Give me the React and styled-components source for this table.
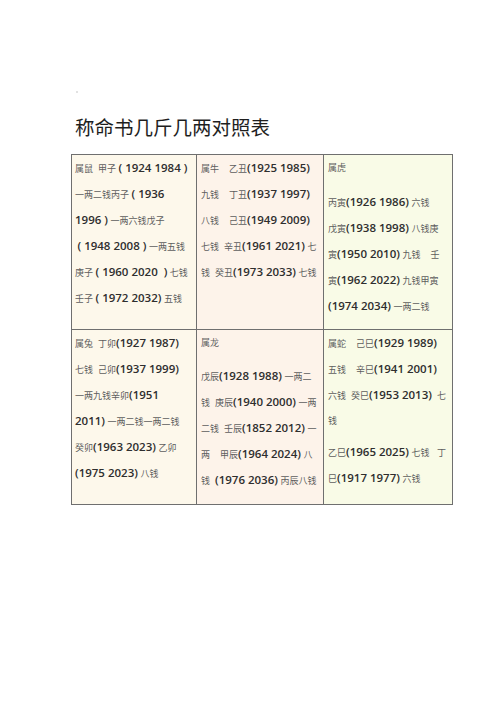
import React from "react";
import styled, { createGlobalStyle } from "styled-components";

const Global = createGlobalStyle`
  html, body { margin: 0; padding: 0; background: #ffffff; }
  body { font-family: "Liberation Sans", "Noto Sans CJK SC", sans-serif; }
`;

const Page = styled.div`
  width: 500px;
  height: 707px;
  box-sizing: border-box;
  padding: 91px 0 0 71px;
  background: #fff;
`;

const Dot = styled.div`
  width: 2px;
  height: 2px;
  margin-left: 5px;
  background: #d8d8d8;
  border-radius: 1px;
`;

const Title = styled.h1`
  margin: 19px 0 0 4px;
  font-family: "Noto Sans CJK SC", sans-serif;
  font-size: 19.5px;
  font-weight: 400;
  line-height: 30px;
  color: #1e1e1e;
  height: 42px;
`;

const Table = styled.div`
  display: grid;
  grid-template-columns: 125px 127px 129px;
  grid-template-rows: 175px 175px;
  width: 382px;
  box-sizing: border-box;
  border-left: 1px solid #6f6f6f;
  border-top: 1px solid #6f6f6f;
`;

const bgs = ["#fdf8eb", "#fdf3ea", "#f9fbe7"];

const Cell = styled.div`
  box-sizing: border-box;
  border-right: 1px solid #6f6f6f;
  border-bottom: 1px solid #6f6f6f;
  background: ${(p) => bgs[p.$col]};
  padding: 0 0 0 ${(p) => (p.$col === 0 ? 3 : 4)}px;
  overflow: hidden;
`;

const Line = styled.div`
  height: 26px;
  line-height: 26px;
  white-space: pre;
  font-family: "Liberation Sans", "Noto Sans CJK SC", sans-serif;
  font-size: 9px;
  color: #5e5e5e;
  margin-top: ${(p) => p.$gap || 0}px;
`;

const Num = styled.span`
  font-family: "Open Sans", "Liberation Sans", sans-serif;
  font-weight: 600;
  font-size: 11.5px;
  color: #2e2e2e;
`;

const renderLine = (s) => {
  const parts = s.split(/([0-9()]+(?: +[0-9()]+)*)/);
  return parts.map((p, i) =>
    i % 2 === 1 ? <Num key={i}>{p}</Num> : <React.Fragment key={i}>{p}</React.Fragment>
  );
};

const cells = [
  [
    ["属鼠  甲子 ( 1924 1984 )"],
    ["一两二钱丙子 ( 1936"],
    ["1996 ) 一两六钱戊子"],
    [" ( 1948 2008 ) 一两五钱"],
    ["庚子 ( 1960 2020  ) 七钱"],
    ["壬子 ( 1972 2032) 五钱"],
  ],
  [
    ["属牛    乙丑(1925 1985)"],
    ["九钱    丁丑(1937 1997)"],
    ["八钱    己丑(1949 2009)"],
    ["七钱  辛丑(1961 2021) 七"],
    ["钱  癸丑(1973 2033) 七钱"],
  ],
  [
    ["属虎"],
    ["丙寅(1926 1986) 六钱", 8],
    ["戊寅(1938 1998) 八钱庚"],
    ["寅(1950 2010) 九钱    壬"],
    ["寅(1962 2022) 九钱甲寅"],
    ["(1974 2034) 一两二钱"],
  ],
  [
    ["属兔  丁卯(1927 1987)"],
    ["七钱  己卯(1937 1999)"],
    ["一两九钱辛卯(1951"],
    ["2011) 一两二钱一两二钱"],
    ["癸卯(1963 2023) 乙卯"],
    ["(1975 2023) 八钱"],
  ],
  [
    ["属龙"],
    ["戊辰(1928 1988) 一两二", 7],
    ["钱  庚辰(1940 2000) 一两"],
    ["二钱  壬辰(1852 2012) 一"],
    ["两    甲辰(1964 2024) 八"],
    ["钱  (1976 2036) 丙辰八钱"],
  ],
  [
    ["属蛇    己巳(1929 1989)"],
    ["五钱    辛巳(1941 2001)"],
    ["六钱  癸巳(1953 2013)  七"],
    ["钱"],
    ["乙巳(1965 2025) 七钱   丁", 5],
    ["巳(1917 1977) 六钱"],
  ],
];

export default function App() {
  return (
    <>
      <Global />
      <Page>
        <Dot />
        <Title>称命书几斤几两对照表</Title>
        <Table>
          {cells.map((lines, ci) => (
            <Cell key={ci} $col={ci % 3}>
              {lines.map(([text, gap], li) => (
                <Line key={li} $gap={gap}>
                  {renderLine(text)}
                </Line>
              ))}
            </Cell>
          ))}
        </Table>
      </Page>
    </>
  );
}
